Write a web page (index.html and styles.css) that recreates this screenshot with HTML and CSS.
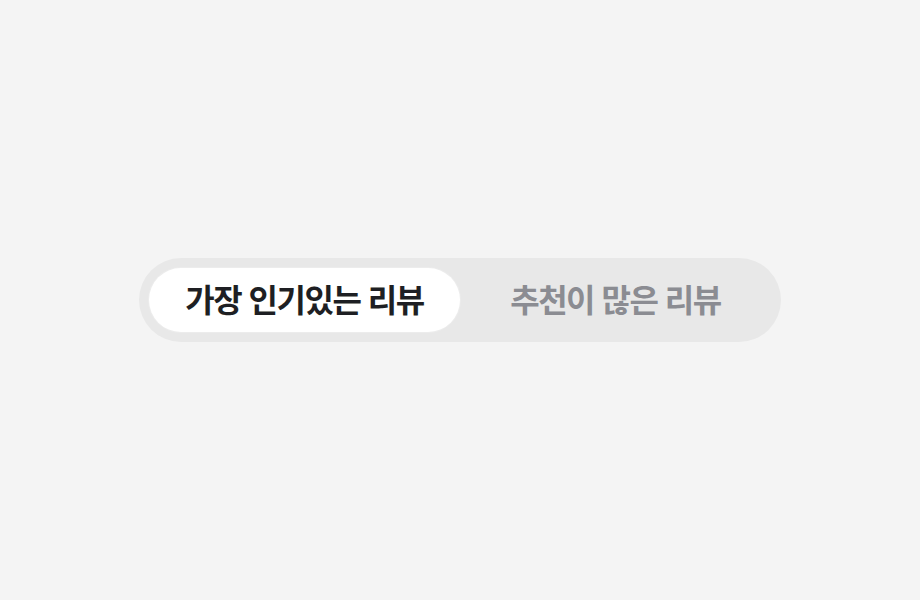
FILE: index.html
```html
<!DOCTYPE html>
<html lang="ko">
<head>
    <meta charset="UTF-8">
    <meta name="viewport" content="width=device-width, initial-scale=1.0">
    <title>리뷰 정렬</title>
<link rel="stylesheet" href="styles.css">
</head>
<body>
<div class="page">
    <div class="segment">
        <button class="segment-item active">가장 인기있는 리뷰</button>
        <button class="segment-item">추천이 많은 리뷰</button>
    </div>
</div>
</body>
</html>
```

FILE: styles.css
```css
html, body {
    margin: 0;
    height: 100%;
}
body {
    background-color: #f4f4f4;
    font-family: "Noto Sans CJK KR", "Noto Sans", sans-serif;
}
.page {
    height: 100%;
    display: flex;
    align-items: center;
    justify-content: center;
}
.segment {
    display: grid;
    grid-template-columns: 1fr 1fr;
    width: 642px;
    padding: 10px;
    box-sizing: border-box;
    background-color: #e8e8e8;
    border-radius: 42px;
}
.segment-item {
    height: 64px;
    border: none;
    border-radius: 32px;
    background: transparent;
    font-family: inherit;
    font-size: 32px;
    font-weight: 700;
    letter-spacing: -1.5px;
    line-height: 1;
    color: #8b8c92;
    cursor: pointer;
    padding: 0 0 4px;
}
.segment-item.active {
    background-color: #ffffff;
    color: #1e1f23;
    box-shadow: 0 0 0 1px #ececec;
}
```
